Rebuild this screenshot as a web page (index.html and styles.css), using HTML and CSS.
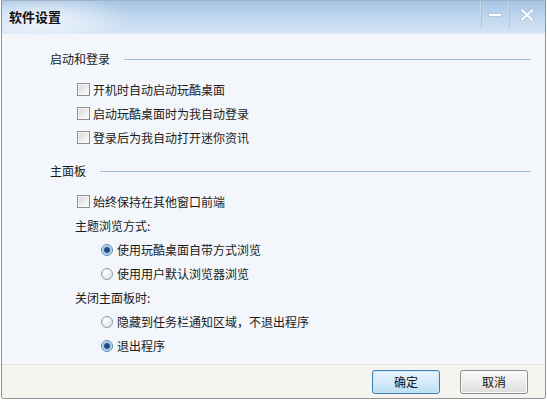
FILE: index.html
```html
<!DOCTYPE html>
<html lang="zh-CN">
<head>
<meta charset="utf-8">
<title>软件设置</title>
<link rel="stylesheet" href="styles.css">
</head>
<body>
<div class="window">
  <div class="titlebar">
    <div class="title">软件设置</div>
    <div class="controls">
      <div class="ctl">
        <svg width="16" height="16" viewBox="0 0 16 16"><rect x="1.5" y="6.5" width="13" height="3" rx="0.5" fill="#ffffff" stroke="#a6bdd5" stroke-width="0.8"/></svg>
      </div>
      <div class="ctl">
        <svg width="14" height="12" viewBox="0 0 14 12"><path d="M2 1.5 L12 10.5 M12 1.5 L2 10.5" stroke="#a6bdd5" stroke-width="3.4" stroke-linecap="square"/><path d="M2 1.5 L12 10.5 M12 1.5 L2 10.5" stroke="#ffffff" stroke-width="2" stroke-linecap="square"/></svg>
      </div>
    </div>
  </div>
  <div class="content">
    <div class="section"><span>启动和登录</span><i class="rule"></i></div>
    <div class="row cb-row gap-s"><span class="checkbox"></span><span>开机时自动启动玩酷桌面</span></div>
    <div class="row cb-row"><span class="checkbox"></span><span>启动玩酷桌面时为我自动登录</span></div>
    <div class="row cb-row"><span class="checkbox"></span><span>登录后为我自动打开迷你资讯</span></div>
    <div class="section gap-l"><span>主面板</span><i class="rule"></i></div>
    <div class="row cb-row gap-s"><span class="checkbox"></span><span>始终保持在其他窗口前端</span></div>
    <div class="row label-row">主题浏览方式:</div>
    <div class="row radio-row"><span class="radio checked"></span><span>使用玩酷桌面自带方式浏览</span></div>
    <div class="row radio-row"><span class="radio"></span><span>使用用户默认浏览器浏览</span></div>
    <div class="row label-row">关闭主面板时:</div>
    <div class="row radio-row"><span class="radio"></span><span>隐藏到任务栏通知区域，不退出程序</span></div>
    <div class="row radio-row"><span class="radio checked"></span><span>退出程序</span></div>
  </div>
  <div class="footer">
    <button class="btn primary">确定</button>
    <button class="btn">取消</button>
  </div>
</div>
</body>
</html>
```
FILE: styles.css
```css
html, body {
  margin: 0;
  padding: 0;
  background: #ffffff;
}
body {
  font-family: "Noto Sans CJK SC", "Liberation Sans", sans-serif;
  font-size: 12px;
  color: #1a1a1a;
}
.window {
  margin-left: 1px;
  width: 543px;
  height: 397px;
  border: 1px solid #8f9398;
  border-top-color: #9fb3c8;
  border-radius: 0 0 3px 3px;
  display: flex;
  flex-direction: column;
  overflow: hidden;
  background: #f3f7fb;
}
.titlebar {
  height: 32px;
  display: flex;
  align-items: flex-start;
  justify-content: space-between;
  background:
    radial-gradient(ellipse 90px 26px at 40px 18px, rgba(255,255,255,0.75), rgba(255,255,255,0) 100%),
    linear-gradient(#a6c4e5, #c4daf0 60%, #d3e4f5);
  border-bottom: 1px solid #dde9f5;
}
.title {
  font-weight: bold;
  font-size: 13px;
  line-height: 16px;
  padding: 8px 0 0 7px;
  color: #111;
}
.controls {
  display: flex;
  height: 27px;
}
.ctl {
  width: 27px;
  height: 27px;
  border-left: 1px solid #c8d9ea;
  box-shadow: inset 1px 0 0 rgba(140,170,200,0.35);
  display: flex;
  align-items: center;
  justify-content: center;
}
.ctl:last-child {
  width: 36px;
}
.content {
  flex: 1;
  padding: 13px 14px 0 48px;
}
.section {
  display: flex;
  align-items: center;
  gap: 14px;
  height: 24px;
  line-height: 24px;
}
.rule {
  flex: 1;
  height: 1px;
  background: #a2bad2;
}
.row {
  height: 24px;
  display: flex;
  align-items: center;
}
.gap-s { margin-top: 6px; }
.gap-l { margin-top: 10px; }
.cb-row { padding-left: 27px; }
.label-row { padding-left: 25px; }
.radio-row { padding-left: 51px; }
.checkbox {
  box-sizing: border-box;
  width: 13px;
  height: 13px;
  border: 1px solid #8e8f8f;
  background: linear-gradient(135deg, #d9dadb, #f4f4f4 80%);
  box-shadow: inset 0 0 0 1px #f6f6f6;
  margin-right: 3px;
  margin-top: 1px;
}
.radio {
  box-sizing: border-box;
  width: 12px;
  height: 12px;
  border-radius: 50%;
  border: 1px solid #969a9f;
  background: radial-gradient(circle at 40% 35%, #ffffff, #e3e5e8 80%);
  margin-right: 4px;
  margin-top: 1px;
}
.radio.checked {
  border-color: #5b87b8;
  background: radial-gradient(circle at 50% 50%, #1f3f6c 0, #2b5488 2.5px, #9cc3e8 3.5px, #e6f0fa 5.5px);
}
.footer {
  height: 33px;
  border-top: 1px solid #e6e5de;
  background: #f5f4ef;
  display: flex;
  justify-content: flex-end;
  align-items: center;
  gap: 20px;
  padding-right: 17px;
}
.btn {
  box-sizing: border-box;
  width: 68px;
  height: 24px;
  font-family: "Noto Sans CJK SC", "Liberation Sans", sans-serif;
  font-size: 12px;
  color: #111;
  border: 1px solid #8a8c8f;
  border-radius: 3px;
  background: linear-gradient(#fafafa, #ececec 50%, #dcdcdc);
  box-shadow: inset 0 0 0 1px #fbfbfb;
  padding: 0;
  margin: 0;
}
.btn.primary {
  border-color: #3c7fb1;
  background: linear-gradient(#e8f4fc, #d4ebf9 50%, #bcdef4);
  box-shadow: inset 0 0 0 1px #c8e6f8;
}
```
